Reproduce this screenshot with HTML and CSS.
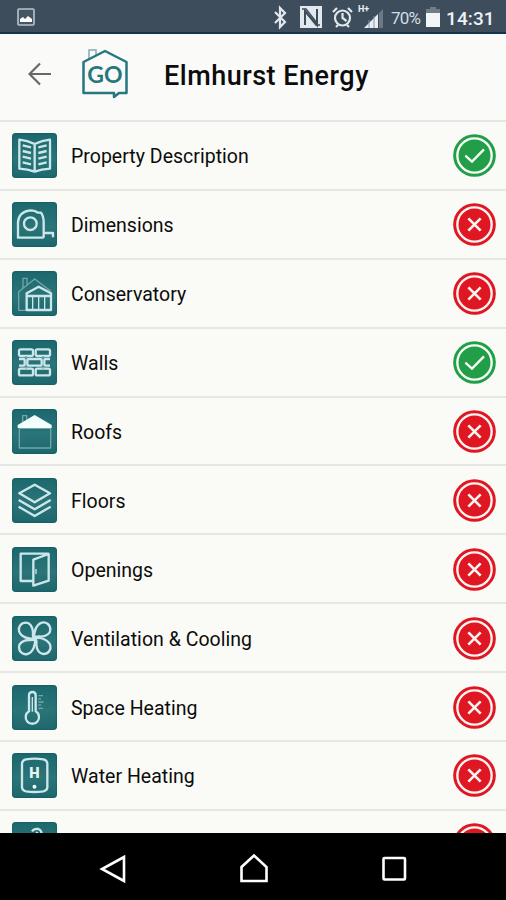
FILE: index.html
```html
<!DOCTYPE html>
<html lang="en">
<head>
<meta charset="utf-8">
<title>Elmhurst Energy</title>
<link rel="stylesheet" href="styles.css">
</head>
<body>
<svg class="defs" aria-hidden="true">
  <symbol id="ok" viewBox="0 0 129 129"><circle cx="64.500" cy="64.500" r="64" fill="#229d48"/><circle cx="64.500" cy="64.500" r="51.500" fill="none" stroke="#f4fff5" stroke-width="7"/><path d="M37 65l20 18 36-37" fill="none" stroke="#f4fff5" stroke-width="7"/></symbol>
  <symbol id="no" viewBox="0 0 129 129"><circle cx="64.500" cy="64.500" r="64" fill="#df1722"/><circle cx="64.500" cy="64.500" r="51.500" fill="none" stroke="#fff3f1" stroke-width="7"/><path d="M46 46l37 37M83 46L46 83" fill="none" stroke="#fff3f1" stroke-width="8"/></symbol>
</svg>
<div class="phone">
  <div class="status">
    <svg class="picture" viewBox="0 0 18 18"><rect x="1" y="1" width="16" height="16" rx="1" fill="#465562" stroke="#b8c4cf" stroke-width="1.600"/><path d="M3 14v-3l3-2 2 2 3-3 4 3v3z" fill="#fff"/></svg>
    <svg class="indicators" viewBox="0 0 116 34"><g fill="none" stroke="#e1e9ef" stroke-width="2.200"><path d="M3 12l10 10-5 5V8l5 5L3 23"/><circle cx="70.500" cy="18" r="7.500"/><path d="M70.500 13v5l4 3M61 12l4-4M80 12l-4-4M64 27l2-2M77 27l-2-2"/></g><path d="M28 6h22v22H28z" fill="#e1e9ef"/><path d="M33 25V11l12 14V9" fill="none" stroke="#3e4d5c" stroke-width="2"/><path d="M30 9h4l11 14M48 25h-4L33 11" fill="none" stroke="#3e4d5c" stroke-width="1.500"/><path d="M92 28l14-14v14z" fill="#e8eff4"/><path d="M107 13l4-4v19h-4z" fill="#6b7985"/><path d="M97 20v8M102 16v12" stroke="#8796a2" stroke-width="1"/><text x="86" y="12" class="network">H+</text></svg>
    <span class="percent">70%</span>
    <svg class="battery" viewBox="0 0 14 20"><path d="M4 0h6v2h4v5H0V2h4z" fill="#6f7d89"/><path d="M0 6h14v14H0z" fill="#f2f6f8"/></svg>
    <span class="clock">14:31</span>
  </div>
  <header class="header">
    <svg class="back" viewBox="0 0 24 24"><path d="M23 12H2M12 1.500L1.500 12 12 22.500" fill="none" stroke="#686868" stroke-width="2.200"/></svg>
    <svg class="logo" viewBox="0 0 46 52"><path d="M7 11V2h7v6" fill="none" stroke="#80adb3" stroke-width="1.500"/><path d="M1.500 14L23 3l21.500 11v31H37l-5 4v-4H1.500z" fill="none" stroke="#26777f" stroke-width="2.500" stroke-linejoin="round"/><text x="23" y="34.500" class="go">GO</text></svg>
    <h1 class="title">Elmhurst Energy</h1>
  </header>
  <main class="list">
    <div class="row">
      <svg class="icon" viewBox="0 0 135 135"><path d="M68 33Q46 22 22 20v87q26 1 46 9 20-8 46-9V20q-24 2-46 13zM68 33v83"/><path d="M32 37l25 6M32 54l25 6M32 71l25 6M32 88l25 6M104 37l-25 6M104 54l-25 6M104 71l-25 6M104 88l-25 6"/></svg>
      <span class="label">Property Description</span><svg class="state"><use href="#ok"/></svg>
    </div>
    <div class="row">
      <svg class="icon" viewBox="0 0 135 135"><path d="M95 107H18V61q2-32 37-36 15 0 22 7h10q8 10 8 29v46M95 93h28v13"/><circle cx="55" cy="65" r="19"/></svg>
      <span class="label">Dimensions</span><svg class="state"><use href="#no"/></svg>
    </div>
    <div class="row">
      <svg class="icon" viewBox="0 0 135 135"><path class="faint" d="M42 118H20V62l48-38 48 36M33 51V22h12v18"/><path d="M44 117V67l36-20 37 20v50zM44 75h73"/><path class="thin" d="M62 75v41M80 75v41M98 75v41"/></svg>
      <span class="label">Conservatory</span><svg class="state"><use href="#no"/></svg>
    </div>
    <div class="row">
      <svg class="icon" viewBox="0 0 135 135"><rect x="21" y="28" width="42" height="20" rx="5"/><rect x="71" y="28" width="43" height="20" rx="5"/><rect x="46" y="57" width="43" height="20" rx="5"/><rect x="21" y="86" width="42" height="20" rx="5"/><rect x="71" y="86" width="43" height="20" rx="5"/><path d="M21 57h13q4 0 4 4v12q0 4-4 4H21M114 57h-13q-4 0-4 4v12q0 4 4 4h13"/><path class="faint" d="M42 48v9M93 48v9M42 77v9M93 77v9"/></svg>
      <span class="label">Walls</span><svg class="state"><use href="#ok"/></svg>
    </div>
    <div class="row">
      <svg class="icon" viewBox="0 0 135 135"><path class="faint" d="M22 58h94v59H22zM32 40V20h12v14"/><path class="solid" d="M68 18l51 30v9H17v-9z"/></svg>
      <span class="label">Roofs</span><svg class="state"><use href="#no"/></svg>
    </div>
    <div class="row">
      <svg class="icon" viewBox="0 0 135 135"><path d="M68 20l46 26-46 27-46-27zM20 66l48 28 48-28M20 86l48 28 48-28"/></svg>
      <span class="label">Floors</span><svg class="state"><use href="#no"/></svg>
    </div>
    <div class="row">
      <svg class="icon" viewBox="0 0 135 135"><path d="M61 102H26V20h84M64 38l46-17v80l-46 15z"/><path class="thin" d="M72 66v15"/></svg>
      <span class="label">Openings</span><svg class="state"><use href="#no"/></svg>
    </div>
    <div class="row">
      <svg class="icon" viewBox="0 0 135 135"><path d="M68 67Q61 63 63 49C62 31 53 20 42 20 26 20 18 34 21 45 25 60 47 72 68 67z"/><path d="M68 67Q61 63 63 49C62 31 53 20 42 20 26 20 18 34 21 45 25 60 47 72 68 67z" transform="rotate(90 68 67)"/><path d="M68 67Q61 63 63 49C62 31 53 20 42 20 26 20 18 34 21 45 25 60 47 72 68 67z" transform="rotate(180 68 67)"/><path d="M68 67Q61 63 63 49C62 31 53 20 42 20 26 20 18 34 21 45 25 60 47 72 68 67z" transform="rotate(270 68 67)"/></svg>
      <span class="label">Ventilation &amp; Cooling</span><svg class="state"><use href="#no"/></svg>
    </div>
    <div class="row">
      <svg class="icon" viewBox="0 0 135 135"><path d="M51 79V31q0-10 10-10t10 10v48a20 20 0 1 1-20 0z"/><path class="thin" d="M61 36v44"/><path class="faint" d="M79 32h14M79 42h8M79 51h16M79 60h8M79 70h14"/></svg>
      <span class="label">Space Heating</span><svg class="state"><use href="#no"/></svg>
    </div>
    <div class="row">
      <svg class="icon" viewBox="0 0 135 135"><path d="M42 19q26-4 52 0 11 2 12 12v73q-1 9-12 11-26 4-52 0-11-2-12-11V31q1-10 12-12z"/><text x="67.500" y="74" class="heat">H</text><circle class="solid" cx="67.500" cy="101" r="6"/></svg>
      <span class="label">Water Heating</span><svg class="state"><use href="#no"/></svg>
    </div>
    <div class="row">
      <svg class="icon" viewBox="0 0 135 135"><path d="M60 28q6-9 19-7 10 3 10 17M77 30l-9 12"/></svg>
      <span class="label"></span><svg class="state"><use href="#no"/></svg>
    </div>
  </main>
  <nav class="nav">
    <svg viewBox="0 0 28 30"><path d="M25 3v24L3 15z"/></svg>
    <svg viewBox="0 0 28 30"><path d="M1.500 13L14 1.500 26.500 13v14h-25z"/></svg>
    <svg viewBox="0 0 28 30"><rect x="3.500" y="4" width="21.500" height="21.500" rx="1"/></svg>
  </nav>
</div>
</body>
</html>
```
FILE: styles.css
```css
* { box-sizing: border-box; }
body { margin: 0; font-family: Roboto, sans-serif; color: #0c0c0c; }
.defs { position: absolute; width: 0; height: 0; }
.phone { display: flex; flex-direction: column; width: 506px; height: 900px; overflow: hidden; background: #fafbf6; }
.status { display: flex; align-items: center; flex: none; height: 34px; padding-left: 17px; background: #3e4d5c; border-bottom: 2px solid #12344e; color: #edf3f7; }
.picture { width: 18px; height: 18px; margin-top: 2px; }
.indicators { width: 116px; height: 34px; margin-left: 237px; margin-top: 2px; }
.network { font-size: 9px; font-weight: 700; fill: #e8eff4; }
.percent { width: 31px; margin-left: 3px; margin-top: 3px; font-size: 17px; letter-spacing: -0.8px; color: #d3dce3; }
.battery { width: 14px; height: 20px; margin: 2px 0 0 4px; }
.clock { margin: 4px 0 0 6px; font-size: 19px; font-weight: 500; letter-spacing: 0.1px; }
.header { display: flex; align-items: center; flex: none; height: 86px; padding-left: 28px; background: #fafaf9; }
.back { width: 24px; height: 24px; margin-top: -7px; }
.logo { width: 46px; height: 52px; margin: -6px 0 0 30px; }
.go { font: 700 23px Lato, sans-serif; fill: #26777f; text-anchor: middle; }
.title { margin: -3px 0 0 36px; font-size: 27px; line-height: 32px; font-weight: 500; letter-spacing: 0.5px; white-space: nowrap; }
.list { flex: 1; min-height: 0; overflow: hidden; }
.row { display: flex; align-items: center; height: 68.9px; padding: 1px 10px 0 12px; border-top: 2px solid #e6e7e3; }
.icon { flex: none; width: 45px; height: 45px; border-radius: 4px; background: linear-gradient(#1b686e, #2b7478 55%, #1d686d); box-shadow: inset 0 0 2px #0b5056; fill: none; stroke: #cce7eb; stroke-width: 7; stroke-linejoin: round; }
.faint { stroke: #71a7ac; stroke-width: 4; }
.thin { stroke-width: 4; }
.solid { fill: #f3ffff; stroke: none; }
.heat { font-size: 44px; font-weight: 900; fill: #e4f5f7; stroke: none; text-anchor: middle; }
.label { flex: 1; margin-left: 14px; padding-top: 3px; font-size: 19.5px; line-height: 24px; letter-spacing: 0.02px; white-space: nowrap; }
.state { flex: none; width: 43px; height: 43px; }
.nav { display: flex; flex: none; justify-content: space-between; align-items: center; height: 67px; padding: 4px 98px 0 99px; background: #000; }
.nav svg { width: 28px; height: 30px; fill: none; stroke: #fff; stroke-width: 2.6; }
```
